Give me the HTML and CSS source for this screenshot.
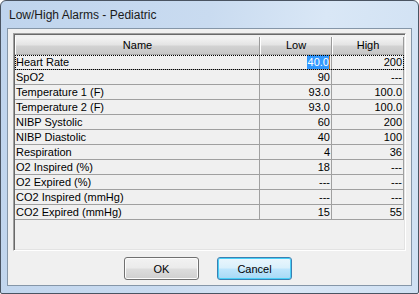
FILE: index.html
```html
<!DOCTYPE html>
<html lang="en">
<head>
	<meta charset="UTF-8">
	<title>Low/High Alarms - Pediatric</title>
	<link rel="stylesheet" href="styles.css">
</head>
<body>
	<div class="window">
		<div class="titlebar">Low/High Alarms - Pediatric</div>
		<div class="client">
			<div class="list">
				<div class="header">
					<div class="hcell">Name</div>
					<div class="hcell">Low</div>
					<div class="hcell">High</div>
				</div>
				<div class="row focused">
					<div class="cell name">Heart Rate</div>
					<div class="cell num"><span class="sel">40.0</span></div>
					<div class="cell num">200</div>
				</div>
				<div class="row"><div class="cell name">SpO2</div><div class="cell num">90</div><div class="cell num">---</div></div>
				<div class="row"><div class="cell name">Temperature 1 (F)</div><div class="cell num">93.0</div><div class="cell num">100.0</div></div>
				<div class="row"><div class="cell name">Temperature 2 (F)</div><div class="cell num">93.0</div><div class="cell num">100.0</div></div>
				<div class="row"><div class="cell name">NIBP Systolic</div><div class="cell num">60</div><div class="cell num">200</div></div>
				<div class="row"><div class="cell name">NIBP Diastolic</div><div class="cell num">40</div><div class="cell num">100</div></div>
				<div class="row"><div class="cell name">Respiration</div><div class="cell num">4</div><div class="cell num">36</div></div>
				<div class="row"><div class="cell name">O2 Inspired (%)</div><div class="cell num">18</div><div class="cell num">---</div></div>
				<div class="row"><div class="cell name">O2 Expired (%)</div><div class="cell num">---</div><div class="cell num">---</div></div>
				<div class="row"><div class="cell name">CO2 Inspired (mmHg)</div><div class="cell num">---</div><div class="cell num">---</div></div>
				<div class="row"><div class="cell name">CO2 Expired (mmHg)</div><div class="cell num">15</div><div class="cell num">55</div></div>
			</div>
			<div class="buttons">
				<button type="button" class="button">OK</button>
				<button type="button" class="button default">Cancel</button>
			</div>
		</div>
	</div>
</body>
</html>
```

FILE: styles.css
```css
body {
	margin: 0;
	font-family: 'Liberation Sans', Arial, sans-serif;
	font-size: 11px;
	color: #000;
}
.window {
	width: 419px;
	height: 294px;
	box-sizing: border-box;
	border: 1px solid #4a5462;
	border-radius: 6px 6px 2px 2px;
	padding: 0 6px 7px;
	background: linear-gradient(100deg, #bfd4ed 0%, #c9dbf0 45%, #d9e7f6 70%, #cfe0f3 100%);
	display: flex;
	flex-direction: column;
}
.titlebar {
	height: 27px;
	line-height: 28px;
	padding-left: 2px;
	font-size: 12px;
	color: #1a1a1a;
}
.client {
	border: 1px solid #8596a8;
	background: #f0f0f0;
	height: 256px;
	padding: 4px 5px 0;
	display: flex;
	flex-direction: column;
}
.list {
	height: 218px;
	box-sizing: border-box;
	border-style: solid;
	border-width: 1px;
	border-color: #a0a0a0 #fff #fff #a0a0a0;
	padding: 1px;
	box-shadow: inset 1px 1px #696969, inset -1px -1px #e3e3e3;
}
.header, .row {
	display: grid;
	grid-template-columns: 245px 72px 72px;
}
.header {
	height: 20px;
	box-sizing: border-box;
	padding-top: 2px;
}
.hcell {
	text-align: center;
	line-height: 16px;
	background: linear-gradient(#f4f4f4, #e4e4e4 45%, #d2d2d2 55%, #c6c6c6);
	border-left: 1px solid #fff;
	border-right: 1px solid #9a9a9a;
	border-bottom: 1px solid #a8a8a8;
}
.row {
	height: 15px;
	box-sizing: border-box;
	border-bottom: 1px solid #a0a0a0;
	line-height: 14px;
}
.cell {
	border-right: 1px solid #a0a0a0;
	white-space: nowrap;
	overflow: hidden;
}
.name {
	padding-left: 1px;
}
.num {
	text-align: right;
	padding-right: 1px;
}
.focused {
	outline: 1px dotted #000;
	outline-offset: -1px;
}
.sel {
	display: inline-block;
	height: 14px;
	vertical-align: top;
	background: #3399ff;
	color: #fff;
	padding-left: 1px;
	border-right: 1px solid #d0802a;
}
.buttons {
	display: flex;
	gap: 18px;
	padding: 6px 0 0 111px;
}
.button {
	width: 75px;
	height: 23px;
	font-family: 'Liberation Sans', Arial, sans-serif;
	font-size: 11px;
	color: #000;
	border: 1px solid #707070;
	border-radius: 3px;
	background: linear-gradient(#f2f2f2, #ebebeb 48%, #dddddd 52%, #cfcfcf);
	box-shadow: inset 0 0 0 1px #fcfcfc;
	padding: 0;
}
.button.default {
	border-color: #3c7fb1;
	background: linear-gradient(#eaf6fd, #d9f0fc 48%, #bee6fd 52%, #a7d9f5);
	box-shadow: inset 0 0 0 1px #48d0f8;
}
```
